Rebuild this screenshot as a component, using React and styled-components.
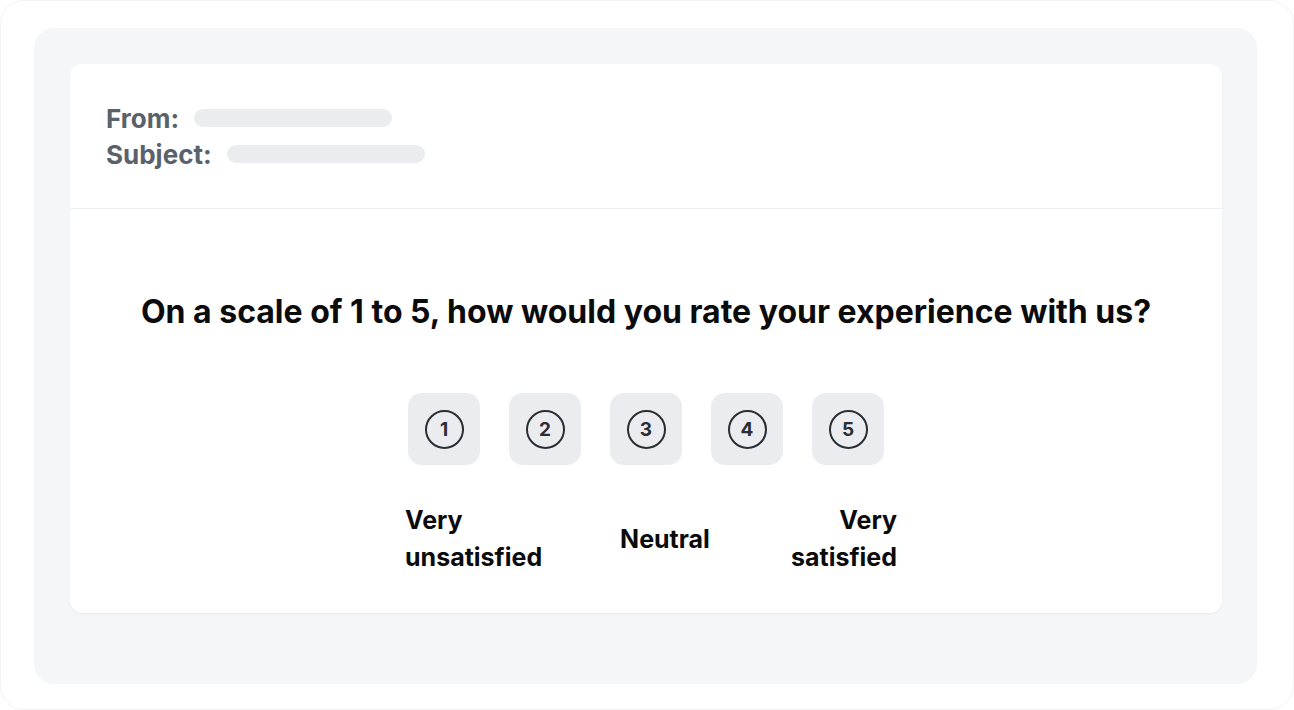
import React from 'react';
import styled, { createGlobalStyle } from 'styled-components';

const GlobalStyle = createGlobalStyle`
  html, body {
    margin: 0;
    padding: 0;
    background: #fff;
  }
  body {
    font-family: Inter, "Noto Sans", "Liberation Sans", sans-serif;
    -webkit-font-smoothing: antialiased;
  }
`;

const FrameSC = styled.div`
  width: 1294px;
  height: 710px;
  box-sizing: border-box;
  border: 1px solid #f3f3f3;
  border-radius: 24px;
  padding: 27px 36px 25px 33px;
  background: #fff;
`;

const PanelSC = styled.div`
  height: 100%;
  box-sizing: border-box;
  background: #f5f6f8;
  border-radius: 20px;
  padding: 36px 35px 71px 36px;
`;

const CardSC = styled.div`
  height: 100%;
  box-sizing: border-box;
  background: #fff;
  border-radius: 12px;
  box-shadow: 0 1px 2px rgba(16, 24, 40, 0.06);
  display: flex;
  flex-direction: column;
`;

const HeaderSC = styled.div`
  padding: 36px 36px;
  border-bottom: 1px solid #eceef1;
  display: flex;
  flex-direction: column;
`;

const MetaRowSC = styled.div`
  display: flex;
  align-items: center;
  gap: 15px;
  height: 36px;
  font-size: 26px;
  font-weight: 700;
  color: #59616b;
`;

const PlaceholderSC = styled.span`
  display: block;
  width: 198px;
  height: 18px;
  border-radius: 9px;
  background: #ebecf0;
`;

const BodySC = styled.div`
  flex: 1;
  display: flex;
  flex-direction: column;
  align-items: center;
  padding-top: 83px;
`;

const QuestionSC = styled.h1`
  margin: 0;
  font-size: 32px;
  line-height: 40px;
  font-weight: 700;
  color: #0b0b0c;
`;

const ScaleSC = styled.div`
  display: flex;
  gap: 29px;
  margin-top: 61px;
`;

const RateButtonSC = styled.button`
  width: 72px;
  height: 72px;
  border: none;
  border-radius: 14px;
  background: #ebecf0;
  display: flex;
  align-items: center;
  justify-content: center;
  padding: 0;
  cursor: pointer;
`;

const CircleNumSC = styled.span`
  width: 39px;
  height: 39px;
  box-sizing: border-box;
  border: 2.8px solid #2a2d32;
  border-radius: 50%;
  display: flex;
  align-items: center;
  justify-content: center;
  font-size: 19px;
  font-weight: 700;
  color: #2a2d32;
  font-family: Inter, "Liberation Sans", sans-serif;
`;

const LabelsSC = styled.div`
  display: flex;
  align-items: center;
  width: 492px;
  margin-top: 37px;
  margin-left: 10px;
`;

const LabelSC = styled.div`
  font-size: 25px;
  line-height: 37px;
  font-weight: 700;
  color: #0b0b0c;
  text-align: ${(props) => props.align || 'left'};
  width: ${(props) => props.w}px;
  margin-left: ${(props) => props.ml || 0}px;
`;

const App = () => {
  const ratings = [1, 2, 3, 4, 5];
  return (
    <>
      <GlobalStyle />
      <FrameSC>
        <PanelSC>
          <CardSC>
            <HeaderSC>
              <MetaRowSC>
                From:
                <PlaceholderSC />
              </MetaRowSC>
              <MetaRowSC>
                Subject:
                <PlaceholderSC />
              </MetaRowSC>
            </HeaderSC>
            <BodySC>
              <QuestionSC>On a scale of 1 to 5, how would you rate your experience with us?</QuestionSC>
              <ScaleSC>
                {ratings.map((n) => (
                  <RateButtonSC key={n} aria-label={`Rate ${n}`}>
                    <CircleNumSC>{n}</CircleNumSC>
                  </RateButtonSC>
                ))}
              </ScaleSC>
              <LabelsSC>
                <LabelSC w={142}>Very unsatisfied</LabelSC>
                <LabelSC w={92} ml={72} align="center">Neutral</LabelSC>
                <LabelSC w={110} ml={76} align="right">Very satisfied</LabelSC>
              </LabelsSC>
            </BodySC>
          </CardSC>
        </PanelSC>
      </FrameSC>
    </>
  );
};

export default App;
